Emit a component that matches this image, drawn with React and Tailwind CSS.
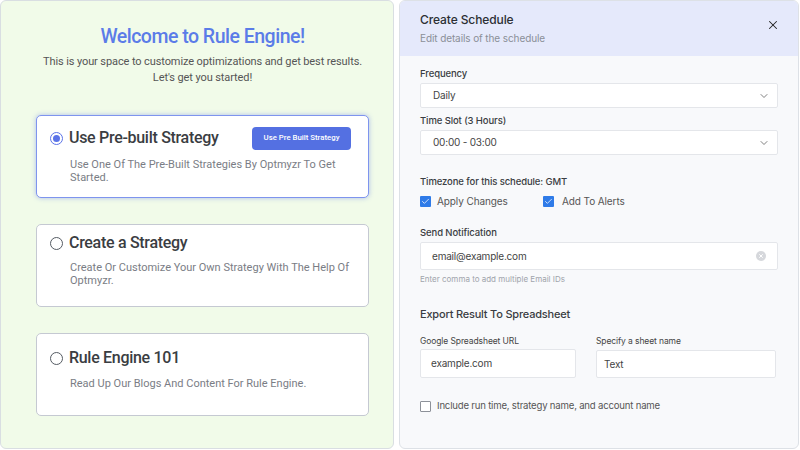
import { ChevronDown, X, Check } from "lucide-react";

function Radio({ checked }) {
  return checked ? (
    <span className="w-[13px] h-[13px] rounded-full border-[1.5px] border-[#5b73e8] flex items-center justify-center shrink-0">
      <span className="w-[7px] h-[7px] rounded-full bg-[#5b73e8]"></span>
    </span>
  ) : (
    <span className="w-[13px] h-[13px] rounded-full border-[1.5px] border-[#555b63] shrink-0"></span>
  );
}

function CheckBox({ checked }) {
  return checked ? (
    <span className="w-[11px] h-[11px] rounded-[1px] bg-[#2f7be8] flex items-center justify-center shrink-0">
      <Check size={9} strokeWidth={2} color="#ffffff" />
    </span>
  ) : (
    <span className="w-[11px] h-[11px] rounded-[1px] border border-[#8d9199] bg-white shrink-0"></span>
  );
}

function Select({ value }) {
  return (
    <div className="mt-[2px] h-[25px] bg-white border border-[#e4e6ea] rounded-[2px] flex items-center justify-between pl-[12px] pr-[7px]">
      <span className="text-[10px] tracking-[-0.2px] text-[#444]">{value}</span>
      <ChevronDown size={12} strokeWidth={1.5} color="#555" />
    </div>
  );
}

function App() {
  return (
    <div className="w-[800px] h-[450px] flex gap-[5px] bg-white">
      {/* left welcome panel */}
      <div className="w-[394px] h-[449px] rounded-[6px] border border-[#d9dee2] bg-[#f1fbe9] pl-[35px] pr-[24px] pt-[24px] font-['Roboto',sans-serif]">
        <h1 className="text-center text-[19.5px] tracking-[-0.5px] leading-[24px] font-medium text-[#5b7ce8]">Welcome to Rule Engine!</h1>
        <p className="mt-[5px] text-center text-[11px] tracking-[-0.1px] leading-[16px] text-[#555]">
          This is your space to customize optimizations and get best results.
          <br />
          Let's get you started!
        </p>

        <div className="mt-[29px] flex flex-col gap-[26px]">
          <div className="h-[83px] rounded-[5px] border border-[#7e94ee] bg-white shadow-[0_0_5px_rgba(91,115,232,0.45)] pl-[13px] pr-[17px] pt-[10px]">
            <div className="flex items-center justify-between">
              <div className="flex items-center gap-[6px]">
                <Radio checked />
                <span className="text-[16px] tracking-[-0.3px] leading-[24px] font-medium text-[#3a3d42]">Use Pre-built Strategy</span>
              </div>
              <button className="w-[99px] h-[23px] rounded-[4px] bg-[#5470e2] text-white text-[7.8px] font-medium">
                Use Pre Built Strategy
              </button>
            </div>
            <p className="mt-[8px] pl-[20px] text-[11px] leading-[13px] text-[#7a7d85]">
              Use One Of The Pre-Built Strategies By Optmyzr To Get Started.
            </p>
          </div>

          <div className="h-[83px] rounded-[5px] border border-[#c5c9d2] bg-white pl-[13px] pr-[17px] pt-[6px]">
            <div className="flex items-center gap-[6px]">
              <Radio />
              <span className="text-[16px] tracking-[-0.3px] leading-[24px] font-medium text-[#3a3d42]">Create a Strategy</span>
            </div>
            <p className="mt-[6px] pl-[20px] text-[11px] leading-[13px] text-[#7a7d85]">
              Create Or Customize Your Own Strategy With The Help Of Optmyzr.
            </p>
          </div>

          <div className="h-[83px] rounded-[5px] border border-[#c5c9d2] bg-white pl-[13px] pr-[17px] pt-[12px]">
            <div className="flex items-center gap-[6px]">
              <Radio />
              <span className="text-[16px] tracking-[-0.3px] leading-[24px] font-medium text-[#3a3d42]">Rule Engine 101</span>
            </div>
            <p className="mt-[7px] pl-[20px] text-[11px] leading-[13px] text-[#7a7d85]">
              Read Up Our Blogs And Content For Rule Engine.
            </p>
          </div>
        </div>
      </div>

      {/* right schedule panel */}
      <div className="w-[400px] h-[449px] rounded-[6px] border border-[#dde1e6] bg-[#f8f9fb] overflow-hidden font-['Inter',sans-serif]">
        <div className="h-[55px] bg-[#e5e9fb] pl-[20px] pr-[18px] pt-[10px] flex justify-between">
          <div>
            <div className="text-[12px] tracking-[-0.1px] leading-[18px] font-medium text-[#2c2f33]">Create Schedule</div>
            <div className="mt-[2px] text-[10px] tracking-[-0.1px] leading-[14px] text-[#8a8f98]">Edit details of the schedule</div>
          </div>
          <X size={14} strokeWidth={1.8} color="#222" className="mt-[7px]" />
        </div>

        <div className="px-[20px] pt-[11px]">
          <div className="text-[9.5px] tracking-[-0.1px] leading-[14px] font-medium text-[#3a3d42]">Frequency</div>
          <Select value="Daily" />

          <div className="mt-[6px] text-[9.5px] tracking-[-0.1px] leading-[14px] font-medium text-[#3a3d42]">Time Slot (3 Hours)</div>
          <Select value="00:00 - 03:00" />

          <div className="mt-[20px] text-[9.5px] tracking-[-0.1px] leading-[14px] font-medium text-[#3a3d42]">Timezone for this schedule: GMT</div>
          <div className="mt-[5px] flex items-center h-[14px]">
            <div className="w-[123px] flex items-center gap-[6px]">
              <CheckBox checked />
              <span className="text-[10px] tracking-[-0.1px] text-[#555]">Apply Changes</span>
            </div>
            <div className="flex items-center gap-[8px]">
              <CheckBox checked />
              <span className="text-[10px] tracking-[-0.1px] text-[#555]">Add To Alerts</span>
            </div>
          </div>

          <div className="mt-[18px] text-[9.5px] tracking-[-0.1px] leading-[14px] font-medium text-[#3a3d42]">Send Notification</div>
          <div className="mt-[2px] h-[28px] bg-white border border-[#e4e6ea] rounded-[2px] flex items-center justify-between pl-[11px] pr-[11px]">
            <span className="text-[10px] tracking-[-0.2px] text-[#444]">email@example.com</span>
            <svg width="10" height="10" viewBox="0 0 10 10">
              <circle cx="5" cy="5" r="5" fill="#d6d8dc" />
              <path d="M3.3 3.3 L6.7 6.7 M6.7 3.3 L3.3 6.7" stroke="#fff" strokeWidth="1" />
            </svg>
          </div>
          <div className="mt-[3px] text-[8px] leading-[12px] text-[#a0a4ab]">Enter comma to add multiple Email IDs</div>

          <div className="mt-[21px] text-[11px] tracking-[-0.2px] leading-[16px] font-medium text-[#3a3d42]">Export Result To Spreadsheet</div>

          <div className="mt-[13px] flex gap-[20px]">
            <div className="w-[156px]">
              <div className="text-[8.5px] tracking-[-0.1px] leading-[12px] text-[#444]">Google Spreadsheet URL</div>
              <div className="mt-[2px] h-[29px] bg-white border border-[#e4e6ea] rounded-[2px] flex items-center pl-[10px]">
                <span className="text-[10px] tracking-[-0.2px] text-[#444]">example.com</span>
              </div>
            </div>
            <div className="w-[180px]">
              <div className="text-[8.5px] tracking-[-0.1px] leading-[12px] text-[#444]">Specify a sheet name</div>
              <div className="mt-[3px] h-[28px] bg-white border border-[#e4e6ea] rounded-[2px] flex items-center pl-[7px]">
                <span className="text-[10px] tracking-[-0.2px] text-[#444]">Text</span>
              </div>
            </div>
          </div>

          <div className="mt-[21px] flex items-center gap-[6px] h-[14px]">
            <CheckBox />
            <span className="text-[9.6px] tracking-[-0.2px] text-[#555]">Include run time, strategy name, and account name</span>
          </div>
        </div>
      </div>
    </div>
  );
}

export default App;
